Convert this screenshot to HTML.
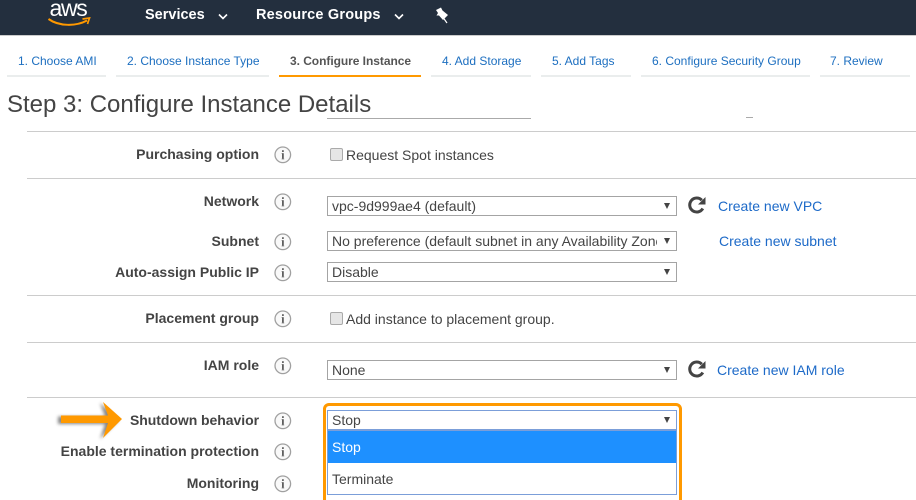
<!DOCTYPE html>
<html><head><meta charset="utf-8">
<style>
html,body{margin:0;padding:0;background:#fff}
#p{position:relative;width:916px;height:500px;overflow:hidden;background:#fff;font-family:"Liberation Sans",Arial,sans-serif;color:#444}
.a{position:absolute;white-space:nowrap}
.nav{font-weight:bold;font-size:14.5px;color:#fff;line-height:18px}
.tab{font-size:12px;line-height:14px;color:#1d6fc0;top:54px}
.bar{position:absolute;top:75px;height:2px;background:#eaeded}
.hr{position:absolute;left:27px;width:889px;height:1px;background:#ccc}
.lb{font-weight:bold;font-size:14px;line-height:16px;color:#444;text-align:right;right:657px}
.sel{position:absolute;left:327px;width:350px;height:20px;border:1px solid #a4a4a4;box-sizing:border-box;font-size:14px;line-height:18px;padding-left:4px;color:#444;background:#fff;overflow:hidden;white-space:nowrap}
.sel i{position:absolute;right:0;top:0;width:19px;height:18px;background:#fff}
.sel i:after{content:"";position:absolute;left:6.500px;top:6px;border-left:3.500px solid transparent;border-right:3.500px solid transparent;border-top:6px solid #444}
.lnk{font-size:14px;line-height:16px;color:#1d6ac8}
.cb{position:absolute;width:11px;height:11px;border:1px solid #aaa;border-radius:2px;background:#e6e6e6}
.txt{font-size:14px;line-height:16px;color:#444}
svg.i{position:absolute;left:274px;width:18px;height:18px}
</style></head><body><div id="p">
<div class="a" style="left:0;top:0;width:916px;height:35px;background:#232f3e"></div>
<div class="a" style="left:0;top:35px;width:916px;height:1px;background:#ccc"></div>
<div class="a" style="left:49.500px;top:-3px;font-size:23px;line-height:22px;color:#fff;letter-spacing:-1.300px">aws</div>
<svg class="a" style="left:47px;top:17px" width="44" height="11" viewBox="0 0 44 11"><path d="M1.500 2C12 9.500 29 9.500 40 3.500" fill="none" stroke="#f90" stroke-width="2"/><path d="M35.500 2L42.500 1L40.500 7" fill="none" stroke="#f90" stroke-width="1.700"/></svg>
<div class="a nav" style="left:145px;top:6px">Services</div>
<svg class="a" style="left:218px;top:13px" width="10" height="7"><path d="M1 1.500L5 5.500L9 1.500" fill="none" stroke="#fff" stroke-width="1.600"/></svg>
<div class="a nav" style="left:256px;top:6px;letter-spacing:.2px">Resource Groups</div>
<svg class="a" style="left:394px;top:13px" width="10" height="7"><path d="M1 1.500L5 5.500L9 1.500" fill="none" stroke="#fff" stroke-width="1.600"/></svg>
<svg class="a" style="left:433px;top:6px" width="16" height="18" viewBox="0 0 16 18"><path d="M3 4L8 1.500L9.500 4.500L15 9L10 14L6 9.500L3.500 9.500L5 7Z" fill="#fff"/><path d="M10.500 12L14 17" stroke="#fff" stroke-width="1.200"/></svg>

<div class="a tab" style="left:18px">1. Choose AMI</div><div class="bar" style="left:7px;width:99px"></div>
<div class="a tab" style="left:127px">2. Choose Instance Type</div><div class="bar" style="left:116px;width:153px"></div>
<div class="a tab" style="left:290px;color:#555;font-weight:bold;letter-spacing:-.05px">3. Configure Instance</div><div class="bar" style="left:279px;width:142px;background:#f90"></div>
<div class="a tab" style="left:442px">4. Add Storage</div><div class="bar" style="left:431px;width:100px"></div>
<div class="a tab" style="left:552px">5. Add Tags</div><div class="bar" style="left:541px;width:90px"></div>
<div class="a tab" style="left:652px">6. Configure Security Group</div><div class="bar" style="left:641px;width:169px"></div>
<div class="a tab" style="left:830px">7. Review</div><div class="bar" style="left:820px;width:90px"></div>

<div class="a" style="left:7px;top:91px;font-size:24px;line-height:28px;color:#444">Step 3: Configure Instance Details</div>
<div class="a" style="left:327px;top:118px;width:204px;height:1px;background:#aaa"></div>
<div class="a" style="left:746px;top:117px;width:7px;height:1px;background:#aaa"></div>
<div class="hr" style="top:131px"></div>
<div class="hr" style="top:178px"></div>
<div class="hr" style="top:295px"></div>
<div class="hr" style="top:342px"></div>
<div class="hr" style="top:397px"></div>

<div class="a lb" style="top:146px">Purchasing option</div>
<div class="a lb" style="top:193px">Network</div>
<div class="a lb" style="top:233px">Subnet</div>
<div class="a lb" style="top:264px">Auto-assign Public IP</div>
<div class="a lb" style="top:310px">Placement group</div>
<div class="a lb" style="top:357px">IAM role</div>
<div class="a lb" style="top:412px;letter-spacing:-.05px">Shutdown behavior</div>
<div class="a lb" style="top:443px">Enable termination protection</div>
<div class="a lb" style="top:475px">Monitoring</div>

<svg width="0" height="0" style="position:absolute"><defs><g id="ic"><circle cx="8.800" cy="8.800" r="7.800" fill="#f9f9f9" stroke="#a0a0a0" stroke-width="1.300"/><rect x="8" y="4.200" width="1.800" height="1.800" fill="#666"/><path d="M8.900 7.200V12.800" fill="none" stroke="#555" stroke-width="1.700"/><path d="M7.600 7.500H9M7.600 13H10.200" fill="none" stroke="#777" stroke-width=".8"/></g></defs></svg>
<svg class="i" style="top:146px"><use href="#ic"/></svg>
<svg class="i" style="top:193px"><use href="#ic"/></svg>
<svg class="i" style="top:233px"><use href="#ic"/></svg>
<svg class="i" style="top:264px"><use href="#ic"/></svg>
<svg class="i" style="top:310px"><use href="#ic"/></svg>
<svg class="i" style="top:357px"><use href="#ic"/></svg>
<svg class="i" style="top:412px"><use href="#ic"/></svg>
<svg class="i" style="top:443px"><use href="#ic"/></svg>
<svg class="i" style="top:475px"><use href="#ic"/></svg>

<div class="cb" style="left:330px;top:148px"></div>
<div class="a txt" style="left:346px;top:147px">Request Spot instances</div>
<div class="sel" style="top:196px">vpc-9d999ae4 (default)<i></i></div>
<div class="sel" style="top:231px">No preference (default subnet in any Availability Zone)<i></i></div>
<div class="sel" style="top:262px">Disable<i></i></div>
<div class="cb" style="left:330px;top:312px"></div>
<div class="a txt" style="left:346px;top:311px">Add instance to placement group.</div>
<div class="sel" style="top:360px">None<i></i></div>

<svg class="a" style="left:688px;top:196px" width="18" height="18" viewBox="0 0 18 18"><path d="M14.800 12.500A7 7 0 1 1 13.800 4.200" fill="none" stroke="#444" stroke-width="3"/><path d="M17.500 1V8.500H10Z" fill="#444"/></svg>
<svg class="a" style="left:688px;top:360px" width="18" height="18" viewBox="0 0 18 18"><path d="M14.800 12.500A7 7 0 1 1 13.800 4.200" fill="none" stroke="#444" stroke-width="3"/><path d="M17.500 1V8.500H10Z" fill="#444"/></svg>
<div class="a lnk" style="left:718px;top:198px">Create new VPC</div>
<div class="a lnk" style="left:719px;top:233px">Create new subnet</div>
<div class="a lnk" style="left:717px;top:362px">Create new IAM role</div>

<div class="a" style="left:323px;top:403px;width:359px;height:110px;border:3px solid #f90;border-radius:6px;box-sizing:border-box"></div>
<div class="sel" style="top:410px;border-color:#7b9ed9">Stop<i></i></div>
<div class="a" style="left:327px;top:430px;width:350px;height:65px;border:1px solid #7b9ed9;box-sizing:border-box;background:#fff"></div>
<div class="a" style="left:328px;top:431px;width:348px;height:32px;background:#1e90ff;color:#fff;font-size:14px;line-height:32px;padding-left:4px;box-sizing:border-box">Stop</div>
<div class="a txt" style="left:332px;top:471px">Terminate</div>

<svg class="a" style="left:52px;top:398px" width="76" height="46" viewBox="0 0 76 46"><defs><filter id="b" x="-20%" y="-30%" width="140%" height="160%"><feGaussianBlur stdDeviation="1.600"/></filter></defs><path d="M9 17.500H56L51 4L70 21L51 40L56 25H9Z" fill="#444" opacity=".65" filter="url(#b)" transform="translate(-3 1)"/><path d="M9 17.500H56L51 4L70 21L51 40L56 25H9Z" fill="#f90"/></svg>
</div></body></html>
